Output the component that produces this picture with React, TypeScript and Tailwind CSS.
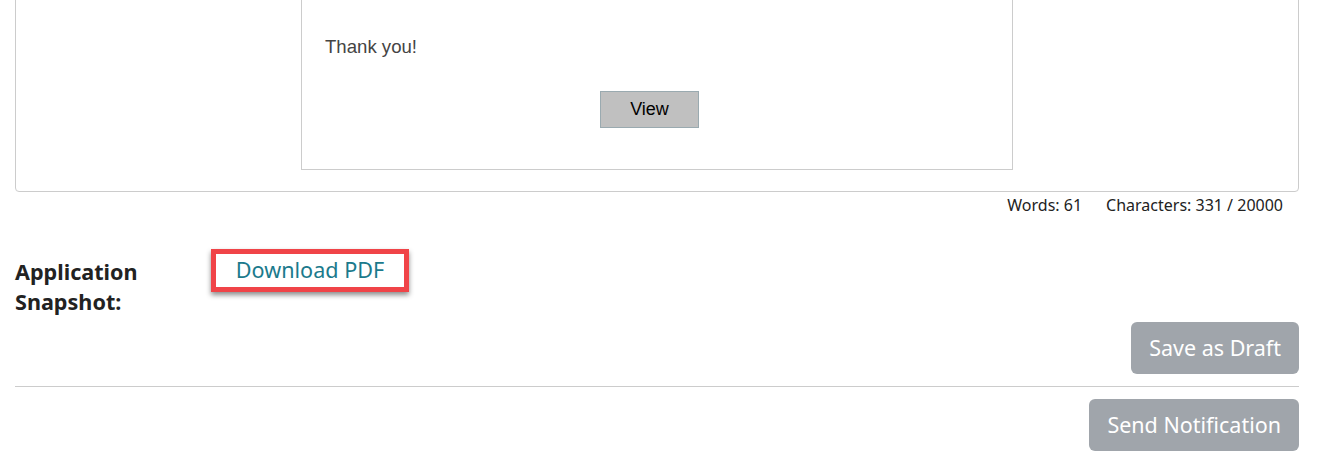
import React from "react";

export default function App() {
  const seg = { fontFamily: '"Noto Sans", "Open Sans", sans-serif' };
  const arial = { fontFamily: '"Liberation Sans", Arial, sans-serif' };
  return (
    <div className="w-[1320px] h-[468px] overflow-hidden bg-white" style={seg}>
      <div className="ml-[15px] w-[1284px]">
        <div className="-mt-5 h-[212px] rounded-[4px] border border-[#cccccc] bg-white">
          <div className="ml-[285px] w-[712px] h-[189px] border-x border-b border-[#cccccc] pt-[55px] pl-[23px]" style={arial}>
            <div className="text-[18.6px] leading-[22px] text-[#444444]">Thank you!</div>
            <div className="mt-[33px] ml-[275px] flex h-[37px] w-[99px] items-center justify-center border border-[#9aaab0] bg-[#c0c0c0] text-[18px] text-black">
              View
            </div>
          </div>
        </div>
        <div className="mt-[3px] flex justify-end gap-[24px] pr-[16px] text-[16px] leading-[20px] text-[#222222]">
          <span>Words: 61</span>
          <span>Characters: 331 / 20000</span>
        </div>
        <div className="mt-[42px] flex items-start">
          <div className="w-[196px] text-[21.6px] font-bold leading-[30px] text-[#222222]">
            Application
            <br />
            Snapshot:
          </div>
          <div className="-mt-[8px] flex h-[43px] w-[198px] items-center justify-center border-[5px] border-[#f04448] shadow-[0_3px_5px_rgba(0,0,0,0.45)]">
            <span className="text-[21.6px] text-[#1b7a8c]">Download PDF</span>
          </div>
        </div>
        <div className="mt-[5px] flex justify-end">
          <button className="h-[52px] rounded-[6px] bg-[#a0a5ab] px-[18px] text-[21.5px] text-white">Save as Draft</button>
        </div>
        <div className="mt-[12px] h-px bg-[#cccccc]" />
        <div className="mt-[12px] flex justify-end">
          <button className="h-[52px] rounded-[6px] bg-[#a0a5ab] px-[18px] text-[21.5px] text-white">Send Notification</button>
        </div>
      </div>
    </div>
  );
}
